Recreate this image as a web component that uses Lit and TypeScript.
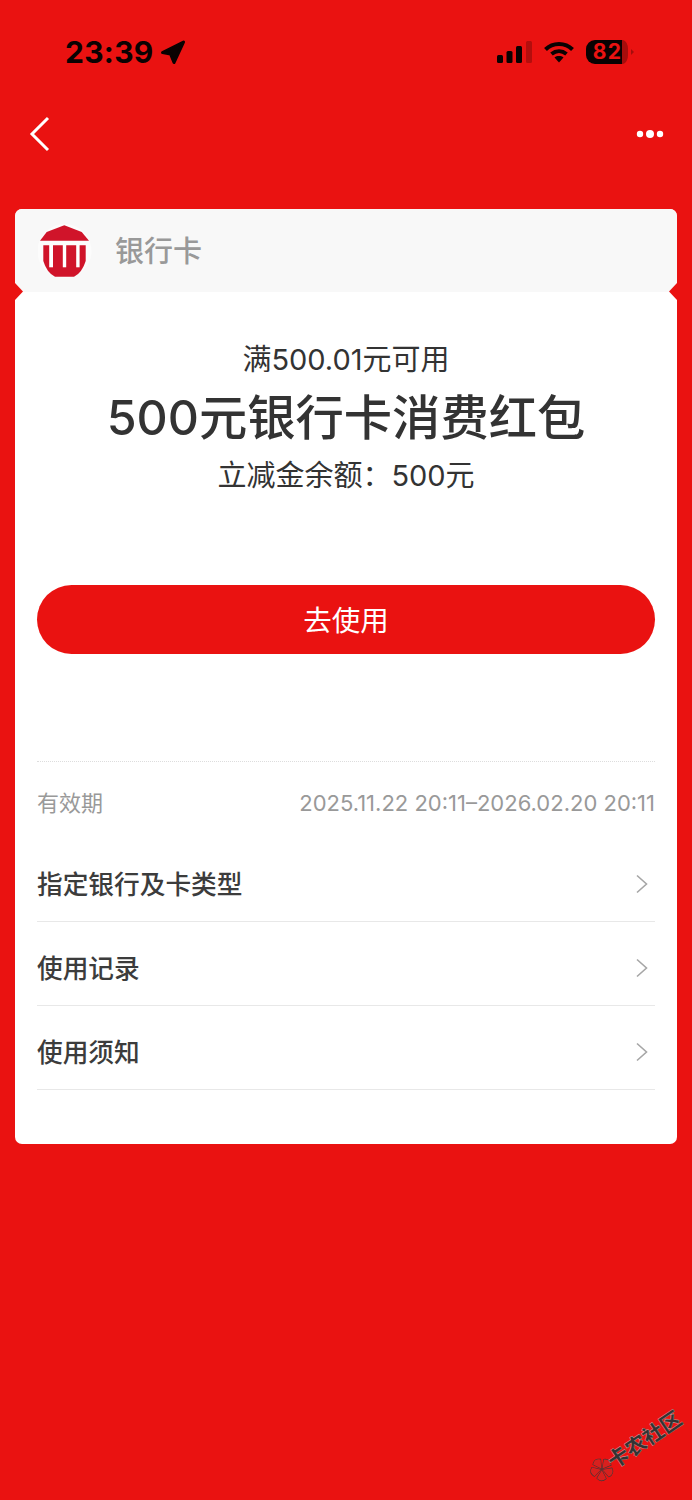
import { LitElement, html, css, svg } from 'lit';
import { customElement } from 'lit/decorators.js';

const chevron = html`<svg class="chev" width="14" height="20" viewBox="0 0 14 20" fill="none">
  <path d="M2 1.5 L11.5 10 L2 18.5" stroke="#a6a6a6" stroke-width="1.6" />
</svg>`;

// watermark flower, five petals around the middle
const petals = [0, 72, 144, 216, 288].map(
  (deg) => svg`<path d="M14 13 L9.5 5 Q14 0.5 18.5 5 Z" transform="rotate(${deg} 14 14)" fill="#d8201e" stroke="#3a3a3a" stroke-width="1.1" paint-order="stroke" />`
);

@customElement('app-root')
export class AppRoot extends LitElement {
  static styles = css`
    :host {
      display: block;
      position: relative;
      width: 692px;
      height: 1500px;
      overflow: hidden;
      background: #ea1211;
      font-family: Inter, 'Noto Sans CJK SC', sans-serif;
      color: #333;
    }

    .status {
      height: 104px;
      box-sizing: border-box;
      padding: 34px 58px 0 65px;
      display: flex;
      justify-content: space-between;
      align-items: flex-start;
    }

    .time-wrap {
      display: flex;
      align-items: center;
      gap: 6px;
      height: 36px;
    }

    .time {
      font-size: 30px;
      font-weight: 700;
      line-height: 36px;
      color: #0a0202;
      letter-spacing: 0.3px;
    }

    .indicators {
      display: flex;
      align-items: center;
      gap: 12px;
      height: 36px;
    }

    .battery {
      position: relative;
      display: flex;
    }

    .battery-text {
      position: absolute;
      left: 0;
      top: 0;
      width: 43px;
      text-align: center;
      font-size: 21px;
      font-weight: 700;
      line-height: 24px;
      letter-spacing: 1.2px;
      color: #ea1211;
    }

    .nav {
      height: 59px;
      padding: 0 28px 0 29px;
      display: flex;
      justify-content: space-between;
      align-items: center;
    }

    .card {
      position: relative;
      margin: 46px 15px 0;
      height: 935px;
      background: #fff;
      border-radius: 7px;
      overflow: hidden;
    }

    .card-top {
      height: 83px;
      background: #f8f8f8;
      display: flex;
      align-items: center;
      gap: 23px;
      padding-left: 23px;
    }

    .card-top span {
      font-size: 29px;
      font-weight: 500;
      color: #999;
      line-height: 36px;
      padding-top: 2px;
    }

    .notch {
      position: absolute;
      top: 74px;
      width: 8px;
      height: 17px;
    }

    .notch.left {
      left: 0;
    }

    .notch.right {
      right: 0;
    }

    .offer {
      text-align: center;
      padding-top: 49px;
      display: flex;
      flex-direction: column;
      align-items: center;
    }

    .condition {
      font-size: 29px;
      line-height: 38px;
    }

    .title {
      font-size: 48.3px;
      font-weight: 500;
      line-height: 60px;
      margin-top: 9px;
    }

    .balance {
      font-size: 29px;
      line-height: 38px;
      margin-top: 9px;
    }

    .use-btn {
      margin: 90px 22px 0;
      height: 69px;
      box-sizing: border-box;
      padding-bottom: 2px;
      border-radius: 35px;
      background: #ea1211;
      color: #fff;
      font-size: 28.5px;
      display: flex;
      align-items: center;
      justify-content: center;
    }

    .info {
      margin: 107px 22px 0;
      border-top: 1px dotted #ddd;
    }

    .validity {
      height: 76px;
      box-sizing: border-box;
      padding-top: 6px;
      display: flex;
      justify-content: space-between;
      align-items: center;
      color: #999;
    }

    .validity .label {
      font-size: 22px;
      margin-bottom: 4px;
    }

    .validity .range {
      font-size: 22px;
    }

    .row {
      height: 84px;
      box-sizing: border-box;
      padding-top: 6px;
      border-bottom: 1px solid #e8e8e8;
      display: flex;
      justify-content: space-between;
      align-items: center;
      font-size: 25.7px;
      font-weight: 500;
      color: #3c3c3c;
    }

    .row .chev {
      margin: 2px 6px 0 0;
    }

    .watermark {
      position: absolute;
      left: 581px;
      top: 1433px;
      display: flex;
      align-items: center;
      transform: rotate(-34deg);
      font-size: 21px;
      font-weight: 900;
      line-height: 26px;
      color: #333;
      -webkit-text-stroke: 0.4px rgba(255, 255, 255, 0.6);
      white-space: nowrap;
    }

    .watermark svg {
      margin-right: -4px;
    }
  `;

  render() {
    return html`
      <div class="status">
        <div class="time-wrap">
          <span class="time">23:39</span>
          <svg width="26" height="26" viewBox="0 0 26 26">
            <path d="M2.5 13.5 L23.5 3 L14 23.5 L10.5 15 Z" fill="#0a0202" stroke="#0a0202" stroke-width="3" stroke-linejoin="round" />
          </svg>
        </div>
        <div class="indicators">
          <svg width="35" height="22" viewBox="0 0 35 22">
            <rect x="0" y="14" width="6" height="8" rx="1.5" fill="#0a0202" />
            <rect x="9.5" y="10" width="6" height="12" rx="1.5" fill="#0a0202" />
            <rect x="19" y="5" width="6" height="17" rx="1.5" fill="#0a0202" />
            <rect x="29" y="0" width="6" height="22" rx="1.5" fill="#b30e0d" />
          </svg>
          <svg width="30" height="22" viewBox="0 0 30 22">
            <path d="M1.5 8.5 C5 5 10 3 15 3 C20 3 25 5 28.5 8.5" stroke="#0a0202" stroke-width="4" fill="none" />
            <path d="M7.5 13 C12 9.4 18 9.4 22.5 13" stroke="#0a0202" stroke-width="4" fill="none" />
            <path d="M10.5 16.5 L15 21.5 L19.5 16.5 C17 14.6 13 14.6 10.5 16.5 Z" fill="#0a0202" />
          </svg>
          <div class="battery">
            <svg width="48" height="24" viewBox="0 0 48 24">
              <path d="M9 0 H36 V24 H9 A9 9 0 0 1 0 15 V9 A9 9 0 0 1 9 0 Z" fill="#0a0202" />
              <path d="M36 0 H37 A6 9 0 0 1 42 9 V15 A6 9 0 0 1 37 24 H36 Z" fill="#a60d0c" />
              <path d="M45 9 L48 12 L45 15 Z" fill="#a60d0c" />
            </svg>
            <span class="battery-text">82</span>
          </div>
        </div>
      </div>
      <div class="nav">
        <svg width="22" height="36" viewBox="0 0 22 36" fill="none">
          <path d="M19 2 L3 18 L19 34" stroke="#fff" stroke-width="3" />
        </svg>
        <svg width="28" height="10" viewBox="0 0 28 10" fill="#fff">
          <circle cx="4" cy="5" r="3.2" />
          <circle cx="14" cy="5" r="4" />
          <circle cx="24" cy="5" r="3.2" />
        </svg>
      </div>
      <div class="card">
        <div class="card-top">
          <svg width="54" height="54" viewBox="0 0 54 54">
            <circle cx="26.5" cy="27" r="27" fill="#fcfcfc" />
            <path d="M26.3 1.3 L43.7 8 L51 16.7 H2 L8.7 8 Z" fill="#d0142a" />
            <path d="M5.3 21.3 H47.7 V37 Q44 49 36 52.7 H17 Q9 49 5.3 37 Z" fill="#d0142a" />
            <rect x="11.2" y="21" width="3.8" height="22.3" fill="#fff" />
            <rect x="24.8" y="21" width="3.4" height="22.3" fill="#fff" />
            <rect x="38.2" y="21" width="3.4" height="22.3" fill="#fff" />
          </svg>
          <span>银行卡</span>
        </div>
        <svg class="notch left" viewBox="0 0 8 17"><path d="M0 0 L8 8.5 L0 17 Z" fill="#ea1211" /></svg>
        <svg class="notch right" viewBox="0 0 8 17"><path d="M8 0 L0 8.5 L8 17 Z" fill="#ea1211" /></svg>
        <div class="offer">
          <div class="condition">满500.01元可用</div>
          <div class="title">500元银行卡消费红包</div>
          <div class="balance">立减金余额：500元</div>
        </div>
        <div class="use-btn">去使用</div>
        <div class="info">
          <div class="validity">
            <span class="label">有效期</span>
            <span class="range">2025.11.22 20:11–2026.02.20 20:11</span>
          </div>
          <div class="row"><span>指定银行及卡类型</span>${chevron}</div>
          <div class="row"><span>使用记录</span>${chevron}</div>
          <div class="row"><span>使用须知</span>${chevron}</div>
        </div>
      </div>
      <div class="watermark">
        <svg width="28" height="28" viewBox="0 0 28 28">${petals}</svg>
        <span>卡农社区</span>
      </div>
    `;
  }
}
